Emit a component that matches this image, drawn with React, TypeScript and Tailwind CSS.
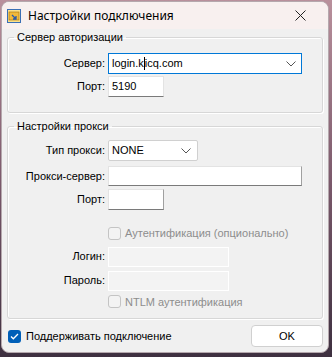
import React from "react";

const font = { fontFamily: '"Liberation Sans", "Noto Sans", sans-serif' } as React.CSSProperties;

const Chevron = () => (
  <svg width="10" height="6" viewBox="0 0 10 6" className="text-[#555]">
    <path d="M0.5 0.5 L5 5 L9.5 0.5" fill="none" stroke="currentColor" strokeWidth="1" />
  </svg>
);

const Check = ({ checked, disabled }: { checked?: boolean; disabled?: boolean }) =>
  checked ? (
    <span className="w-[13px] h-[13px] rounded-[3px] bg-[#005fb8] flex items-center justify-center">
      <svg width="9" height="7" viewBox="0 0 9 7">
        <path d="M1 3.5 L3.3 5.8 L8 1" fill="none" stroke="#fff" strokeWidth="1.3" />
      </svg>
    </span>
  ) : (
    <span
      className={`w-[13px] h-[13px] rounded-[3px] border ${
        disabled ? "border-[#c4c4c4] bg-[#f3f3f3]" : "border-[#8a8a8a] bg-white"
      }`}
    />
  );

const Row = ({ label, children, mt }: { label: string; children: React.ReactNode; mt: string }) => (
  <div className={`flex items-center ${mt}`}>
    <div className="w-[100px] text-right pr-[3px] text-[11px] text-black">{label}</div>
    {children}
  </div>
);

export default function App() {
  return (
    <div
      className="w-[332px] h-[357px] overflow-hidden bg-gradient-to-b from-[#b9909c] via-[#7c5a6c] to-[#3e3040]"
      style={font}
    >
      <div className="ml-[1px] mt-[1px] w-[328px] h-[352px] rounded-[8px] bg-[#f0f0f0] overflow-hidden border border-[#b5a8ad] flex flex-col">
        {/* title bar */}
        <div className="h-[27px] bg-[#f8f0ef] flex items-center pl-[4px] shrink-0">
          <svg width="16" height="16" viewBox="0 0 16 16">
            <rect x="1.5" y="1.5" width="13" height="13" fill="#fbe08a" stroke="#3a6fb5" />
            <rect x="3" y="4" width="10" height="8" fill="#f2b93b" stroke="#b07a10" strokeWidth="0.7" />
            <path d="M6 7 L10 11 M10 8 L10 11 L7 11" stroke="#2b5aa8" strokeWidth="1.3" fill="none" />
          </svg>
          <span className="ml-[6px] text-[12px] text-black" style={{ fontFamily: '"Noto Sans", "Liberation Sans", sans-serif' }}>
            Настройки подключения
          </span>
          <div className="ml-auto mr-[22px]">
            <svg width="11" height="11" viewBox="0 0 11 11">
              <path d="M0.5 0.5 L10.5 10.5 M10.5 0.5 L0.5 10.5" stroke="#222" strokeWidth="1" />
            </svg>
          </div>
        </div>

        <div className="px-[5px] flex flex-col">
          {/* group 1 */}
          <fieldset className="mt-[2px] h-[82px] border border-[#d7d7d7] rounded-[3px] shadow-[inset_1px_1px_0_#fff,1px_1px_0_#fff]">
            <legend className="ml-[6px] px-[3px] text-[11px] text-black leading-[13px]">Сервер авторизации</legend>
            <Row label="Сервер:" mt="mt-[9px]">
              <div className="w-[194px] h-[21px] bg-white border border-[#0078d7] flex items-center pl-[3px] pr-[5px] text-[11px]">
                <span>login.k</span>
                <span className="inline-block w-px h-[13px] bg-black" />
                <span>icq.com</span>
                <span className="ml-auto">
                  <Chevron />
                </span>
              </div>
            </Row>
            <Row label="Порт:" mt="mt-[2px]">
              <div className="w-[56px] h-[21px] bg-white border border-[#e3e3e3] border-b-[#7a7a7a] flex items-center pl-[3px] text-[11px]">
                5190
              </div>
            </Row>
          </fieldset>

          {/* group 2 */}
          <fieldset className="mt-[7px] h-[199px] border border-[#d7d7d7] rounded-[3px] shadow-[inset_1px_1px_0_#fff,1px_1px_0_#fff]">
            <legend className="ml-[6px] px-[3px] text-[11px] text-black leading-[13px]">Настройки прокси</legend>
            <Row label="Тип прокси:" mt="mt-[7px]">
              <div className="w-[90px] h-[21px] bg-white border border-[#d0d0d0] rounded-[2px] flex items-center pl-[3px] pr-[6px] text-[11px]">
                NONE
                <span className="ml-auto">
                  <Chevron />
                </span>
              </div>
            </Row>
            <Row label="Прокси-сервер:" mt="mt-[5px]">
              <div className="w-[194px] h-[20px] bg-white border border-[#e3e3e3] border-b-[#7a7a7a] border-r-[#a0a0a0]" />
            </Row>
            <Row label="Порт:" mt="mt-[3px]">
              <div className="w-[56px] h-[21px] bg-white border border-[#e3e3e3] border-b-[#7a7a7a] border-r-[#a0a0a0]" />
            </Row>
            <div className="flex items-center mt-[15px] pl-[100px]">
              <Check disabled />
              <span className="ml-[4px] text-[11px] text-[#8d8d8d]">Аутентификация (опционально)</span>
            </div>
            <Row label="Логин:" mt="mt-[5px]">
              <div className="w-[121px] h-[20px] bg-[#f3f3f3] border border-[#ffffff]" />
            </Row>
            <Row label="Пароль:" mt="mt-[4px]">
              <div className="w-[121px] h-[20px] bg-[#f3f3f3] border border-[#ffffff]" />
            </Row>
            <div className="flex items-center mt-[3px] pl-[100px]">
              <Check disabled />
              <span className="ml-[4px] text-[11px] text-[#8d8d8d]">NTLM аутентификация</span>
            </div>
          </fieldset>

          {/* bottom */}
          <div className="flex items-center mt-[6px] pl-[1px]">
            <Check checked />
            <span className="ml-[5px] text-[11px] text-black">Поддерживать подключение</span>
            <button className="ml-auto w-[72px] h-[22px] bg-white border border-[#d0d0d0] rounded-[4px] text-[11px] text-black">
              OK
            </button>
          </div>
        </div>
      </div>
    </div>
  );
}
